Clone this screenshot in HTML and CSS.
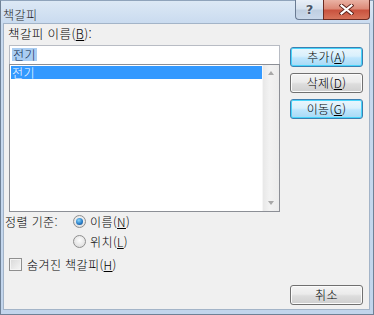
FILE: index.html
```html
<!DOCTYPE html>
<html lang="ko">
<head>
<meta charset="utf-8">
<title>책갈피</title>
<link rel="stylesheet" href="styles.css">
</head>
<body>
<div class="window">
  <div class="titlebar">
    <span class="title">책갈피</span>
    <div class="caption-btns">
      <div class="cbtn help">?</div>
      <div class="cbtn close">
        <svg width="15" height="11" viewBox="0 0 15 11"><path d="M2.5 1.5 L12.5 9.5 M12.5 1.5 L2.5 9.5" stroke="#5a2018" stroke-width="4" stroke-linecap="square"/><path d="M2.5 1.5 L12.5 9.5 M12.5 1.5 L2.5 9.5" stroke="#fff" stroke-width="2.2" stroke-linecap="square"/></svg>
      </div>
    </div>
  </div>
  <div class="client">
    <div class="top">
      <div class="leftcol">
        <div class="label">책갈피 이름(<u>B</u>):</div>
        <div class="input"><span class="sel">전기</span></div>
        <div class="listbox">
          <div class="items"><div class="item selected">전기</div></div>
          <div class="vscroll">
            <div class="arrow up"></div>
            <div class="arrow down"></div>
          </div>
        </div>
      </div>
      <div class="rightcol">
        <div class="btn default">추가(<u>A</u>)</div>
        <div class="btn">삭제(<u>D</u>)</div>
        <div class="btn default">이동(<u>G</u>)</div>
      </div>
    </div>
    <div class="sort">
      <div class="sort-label">정렬 기준:</div>
      <div class="radios">
        <div class="radio-row"><span class="radio checked"></span><span>이름(<u>N</u>)</span></div>
        <div class="radio-row"><span class="radio"></span><span>위치(<u>L</u>)</span></div>
      </div>
    </div>
    <div class="check-row"><span class="checkbox"></span><span>숨겨진 책갈피(<u>H</u>)</span></div>
    <div class="bottom"><div class="btn">취소</div></div>
  </div>
</div>
</body>
</html>
```

FILE: styles.css
```css
* { box-sizing: border-box; }
html, body { margin: 0; padding: 0; }
body {
  font-family: "Noto Sans CJK KR", "Noto Sans", sans-serif;
  font-size: 12px;
  font-weight: 300;
  letter-spacing: 0.4px;
  color: #000;
  background: #c4d7ed;
}
u { text-decoration: underline; text-underline-offset: 1px; }

.window {
  width: 374px;
  height: 315px;
  display: flex;
  flex-direction: column;
  background: linear-gradient(to bottom, #dce8f5 0px, #c8daef 24px, #c2d5ec 100%);
  border: 1px solid #6f8196;
  border-top-color: #8fa3bb;
}

.titlebar {
  height: 22px;
  display: flex;
  align-items: flex-start;
  flex-shrink: 0;
}
.title {
  padding: 6px 0 0 2px;
  line-height: 15px;
  font-size: 12px;
  color: #1e1e1e;
}
.caption-btns {
  margin-left: auto;
  margin-right: 3px;
  display: flex;
  margin-top: -1px;
}
.cbtn {
  height: 20px;
  display: flex;
  align-items: center;
  justify-content: center;
  border: 1px solid #6a7b93;
  border-top: none;
}
.help {
  width: 28px;
  border-radius: 0 0 0 4px;
  border-right: none;
  background: linear-gradient(to bottom, #e9eff7 0%, #d6e1ee 45%, #c0cfe1 55%, #cad8ea 100%);
  color: #4a5668;
  font-family: "DejaVu Sans", sans-serif;
  font-weight: bold;
  font-size: 13px;
  letter-spacing: 0;
  text-shadow: 0 0 2px #fff;
}
.close {
  width: 47px;
  border-radius: 0 0 4px 0;
  border-color: #6b2b22;
  background: linear-gradient(to bottom, #eab2a4 0%, #dc8a78 45%, #c9533f 55%, #d6735a 100%);
}

.client {
  flex: 1;
  margin: 0 3px 4px 2px;
  background: #f0f0f0;
  border: 1px solid #a3b4c8;
  display: flex;
  flex-direction: column;
  padding-top: 3px;
}

.top { display: flex; }
.leftcol {
  width: 277px;
  padding-left: 5px;
}
.label {
  line-height: 14px;
  font-size: 12.5px;
  margin-left: -1px;
  height: 15px;
}
.input {
  margin-top: 3px;
  height: 19px;
  width: 271px;
  background: #fff;
  border: 1px solid #b8bcc4;
  border-bottom: none;
  padding: 2px 0 0 2px;
  line-height: 14px;
}
.sel {
  background: #a9cdf2;
  color: #0b1f4a;
  padding: 0 1px;
  display: inline-block;
  line-height: 13px;
}
.listbox {
  width: 271px;
  height: 148px;
  border: 1px solid #8c8f96;
  background: #fff;
  display: flex;
}
.items {
  flex: 1;
  padding: 1px 0 0 1px;
}
.item {
  height: 13px;
  line-height: 13px;
  padding-left: 1px;
}
.item.selected {
  background: #3399ff;
  color: #fff;
}
.vscroll {
  width: 17px;
  background: linear-gradient(to right, #e8e8e8, #f2f2f2 40%, #ececec);
  border-left: 1px solid #f6f6f6;
  display: flex;
  flex-direction: column;
  justify-content: space-between;
  align-items: center;
  padding: 6px 0 6px;
}
.arrow {
  width: 0;
  height: 0;
  border-left: 3.5px solid transparent;
  border-right: 3.5px solid transparent;
}
.arrow.up { border-bottom: 4px solid #a8a8a8; }
.arrow.down { border-top: 4px solid #a8a8a8; }

.rightcol {
  margin-left: 9px;
  padding-top: 20px;
  display: flex;
  flex-direction: column;
  gap: 6px;
}
.btn {
  width: 73px;
  height: 20px;
  border: 1px solid #707070;
  border-radius: 3px;
  background: linear-gradient(to bottom, #f4f4f4 0%, #ebebeb 45%, #dddddd 55%, #cfcfcf 100%);
  display: flex;
  align-items: center;
  justify-content: center;
  line-height: 14px;
  box-shadow: inset 0 0 0 1px #fbfbfb;
}
.btn.default {
  border-color: #3c7fb1;
  box-shadow: inset 0 0 0 1px #48d5fb;
  background: linear-gradient(to bottom, #eaf6fd 0%, #d9f0fc 45%, #bee6fd 55%, #a7d9f5 100%);
}

.sort {
  display: flex;
  margin-top: 2px;
  padding-left: 1px;
}
.sort-label {
  width: 68px;
  line-height: 14px;
  padding-top: 1px;
}
.radios { display: flex; flex-direction: column; gap: 5px; }
.radio-row {
  display: flex;
  align-items: center;
  gap: 4px;
  height: 15px;
  line-height: 14px;
}
.radio {
  width: 13px;
  height: 13px;
  border-radius: 50%;
  border: 1px solid #8f8f8f;
  background: radial-gradient(circle at 50% 40%, #fdfdfd 0%, #e2e2e2 70%, #cfcfcf 100%);
  display: inline-flex;
  align-items: center;
  justify-content: center;
}
.radio.checked::after {
  content: "";
  width: 7px;
  height: 7px;
  border-radius: 50%;
  background: radial-gradient(circle at 40% 35%, #8ad6fb 0%, #2a7fc9 55%, #143f78 100%);
}

.check-row {
  display: flex;
  align-items: center;
  gap: 5px;
  margin-top: 8px;
  margin-left: 5px;
  height: 15px;
  line-height: 14px;
}
.checkbox {
  width: 13px;
  height: 13px;
  border: 1px solid #8f8f8f;
  background: linear-gradient(135deg, #d8d8d8, #f6f6f6);
  box-shadow: inset 0 0 0 1px #f4f4f4;
}

.bottom {
  display: flex;
  justify-content: flex-end;
  margin-top: auto;
  margin-right: 6px;
  margin-bottom: 4px;
}
```
